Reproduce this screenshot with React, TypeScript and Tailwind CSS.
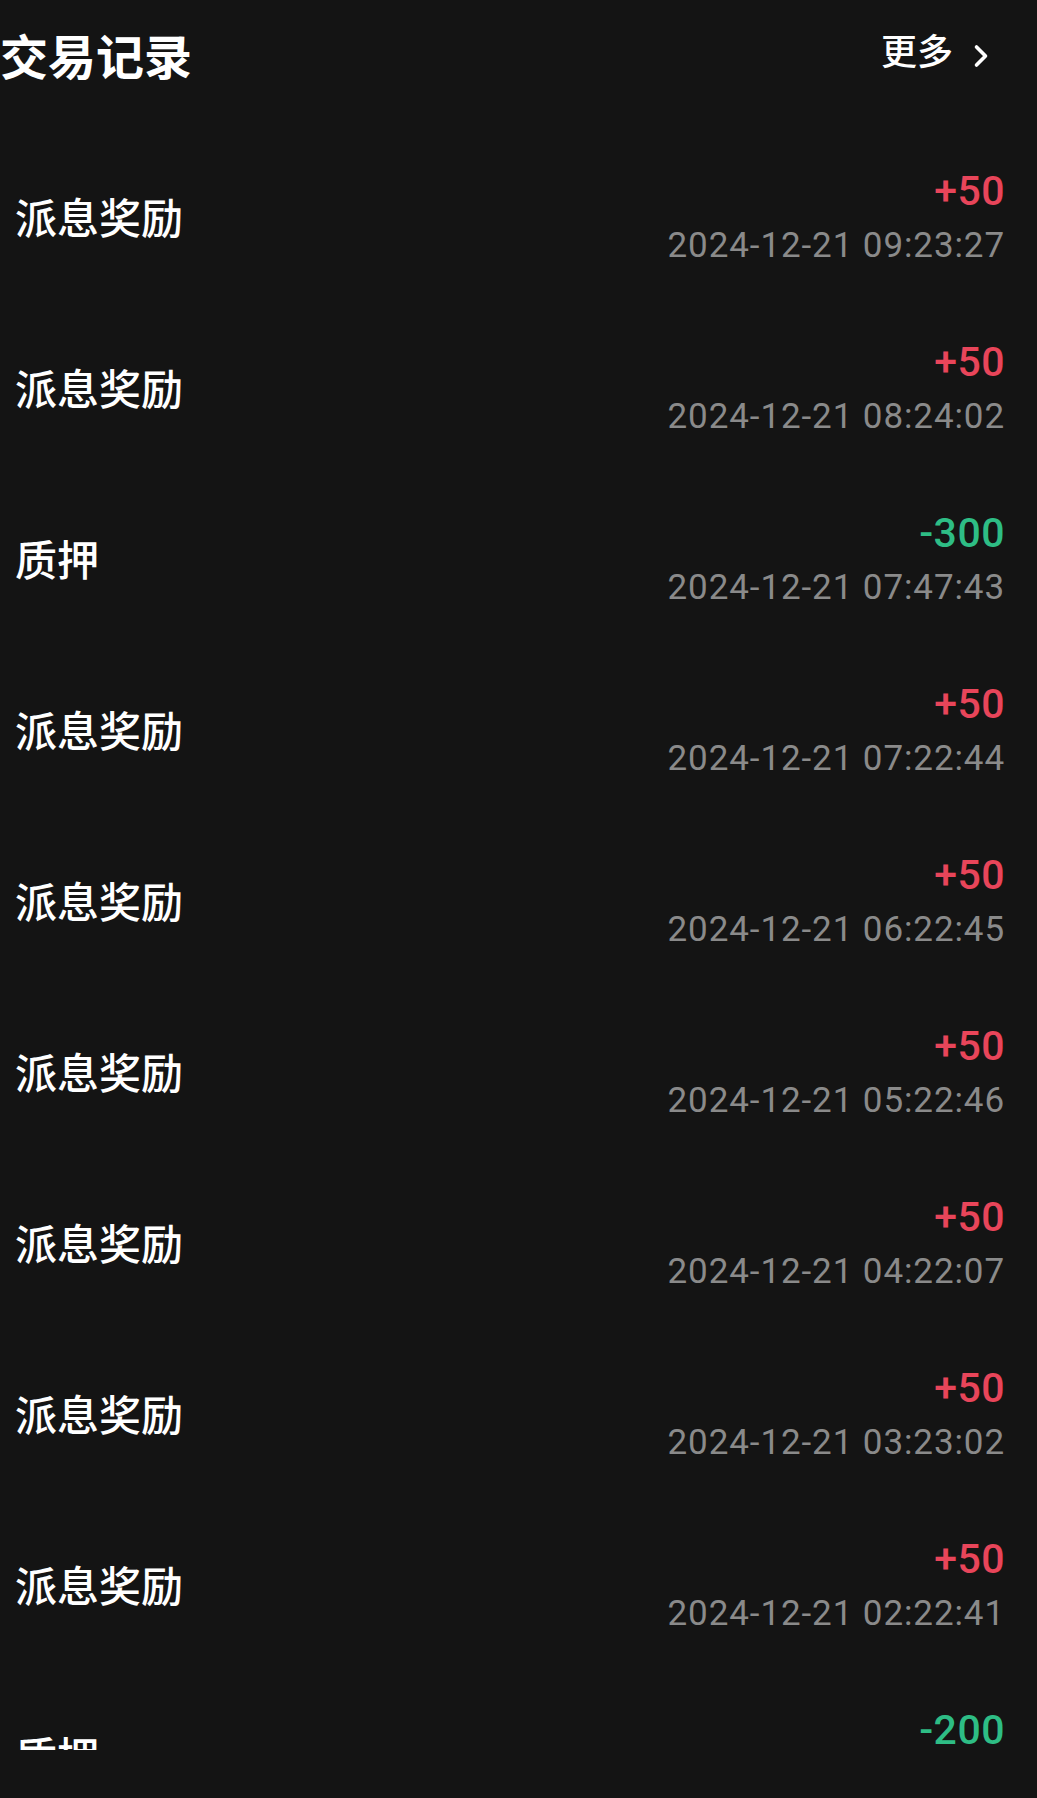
import { ChevronRight } from "lucide-react";

type Record = {
  label: string;
  amount: string;
  time: string;
};

const records: Record[] = [
  { label: "派息奖励", amount: "+50", time: "2024-12-21 09:23:27" },
  { label: "派息奖励", amount: "+50", time: "2024-12-21 08:24:02" },
  { label: "质押", amount: "-300", time: "2024-12-21 07:47:43" },
  { label: "派息奖励", amount: "+50", time: "2024-12-21 07:22:44" },
  { label: "派息奖励", amount: "+50", time: "2024-12-21 06:22:45" },
  { label: "派息奖励", amount: "+50", time: "2024-12-21 05:22:46" },
  { label: "派息奖励", amount: "+50", time: "2024-12-21 04:22:07" },
  { label: "派息奖励", amount: "+50", time: "2024-12-21 03:23:02" },
  { label: "派息奖励", amount: "+50", time: "2024-12-21 02:22:41" },
  { label: "质押", amount: "-200", time: "2024-12-21 01:47:12" },
];

const cjk = "font-['Noto_Sans_CJK_SC','Noto_Sans',sans-serif]";

function RecordRow({ item }: { item: Record }) {
  const up = item.amount.startsWith("+");
  return (
    <div className="flex h-[171px] shrink-0 items-center justify-between pl-[15px] pr-[32px]">
      {/* label */}
      <span className={`${cjk} text-[42px] font-medium leading-none text-white`}>
        {item.label}
      </span>

      {/* amount + time */}
      <div className="flex flex-col items-end pt-[3px] font-['Roboto',sans-serif]">
        <span
          className={
            up
              ? "text-[41px] font-medium leading-none tracking-[0.5px] text-[#e8455a]"
              : "text-[41px] font-medium leading-none tracking-[0.5px] text-[#2ebd85]"
          }
        >
          {item.amount}
        </span>
        <span className="mt-4 text-[35px] leading-none tracking-[0.9px] text-[#8a8a8a]">
          {item.time}
        </span>
      </div>
    </div>
  );
}

export default function App() {
  return (
    <div className="min-h-[1798px] w-full bg-[#141414]">
      {/* Header */}
      <div className="flex h-[107px] items-center justify-between pr-[38px]">
        <h1 className={`${cjk} text-[48px] font-bold leading-none text-white`}>
          交易记录
        </h1>
        <div className="flex items-center gap-[10px]">
          <span className={`${cjk} pb-[9px] text-[36px] font-medium leading-none text-white`}>
            更多
          </span>
          <ChevronRight className="mt-[4px] h-[36px] w-[36px] text-white" strokeWidth={2.4} />
        </div>
      </div>

      {/* List, cut off by the scroll area */}
      <div className="mt-[23px] flex h-[1620px] flex-col overflow-hidden">
        {records.map((r, i) => (
          <RecordRow key={i} item={r} />
        ))}
      </div>
    </div>
  );
}
